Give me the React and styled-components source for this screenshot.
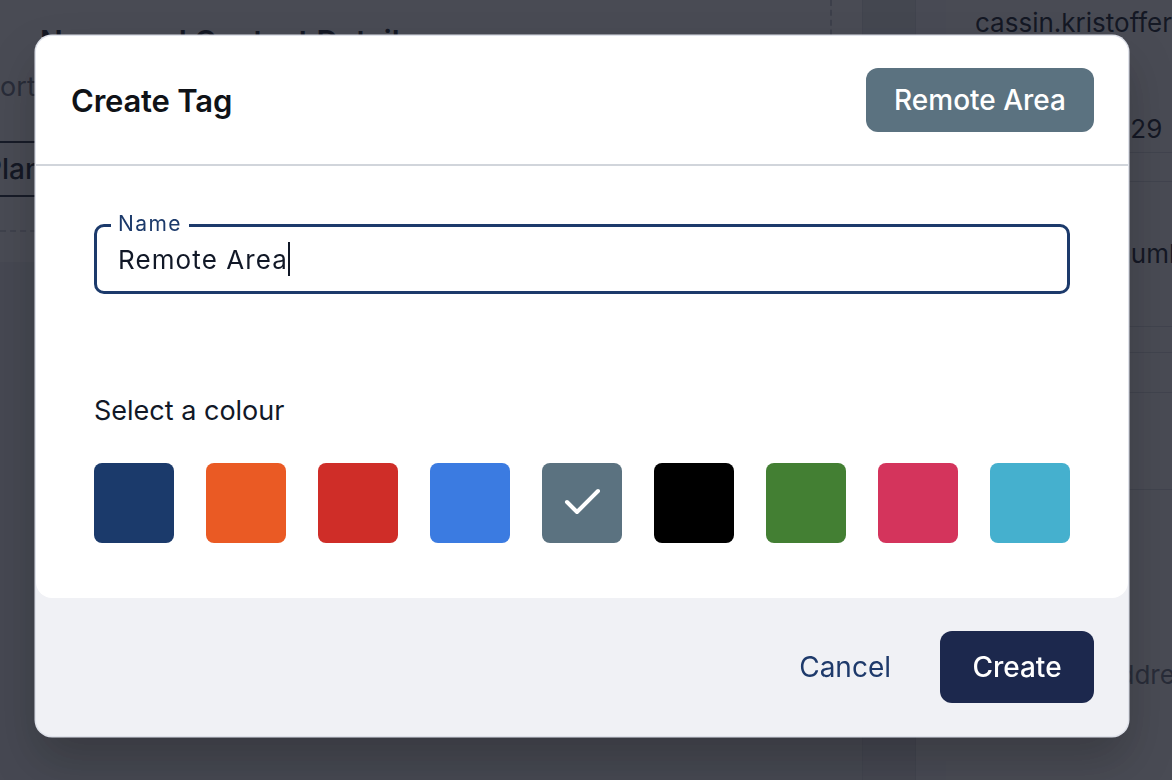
import React, { useState } from "react";
import styled, { createGlobalStyle } from "styled-components";

const GlobalStyle = createGlobalStyle`
  * { box-sizing: border-box; }
  html, body { margin: 0; padding: 0; }
  body {
    font-family: Inter, "Noto Sans", sans-serif;
    overflow: hidden;
  }
`;

const COLOURS = [
  "#1b3a6b",
  "#ea5a24",
  "#cf2d28",
  "#3b7be1",
  "#5b7280",
  "#000000",
  "#437f33",
  "#d4345c",
  "#45b0ce",
];

export default function App() {
  const [name] = useState("Remote Area");
  const [selected, setSelected] = useState(4);

  return (
    <>
      <GlobalStyle />

      {/* page behind the modal */}
      <Page>
        <Main>
          <MainCard>
            <Heading>Name and Contact Details</Heading>
            <SubLine>Portal access</SubLine>
            <TabRow>
              <Tab>Plan</Tab>
            </TabRow>
            <DashedRule />
          </MainCard>
        </Main>
        <Gutter>
          <GutterShade />
          <GutterShade $light />
        </Gutter>
        <Sidebar>
          <Email>cassin.kristoffer@example.com</Email>
          <SideRow $h={113} $align="flex-end" $pad="0 0 8px">
            <SideValue $shift={69}>555-0129</SideValue>
          </SideRow>
          <SideRow $h={29} />
          <SideRow $h={145}>
            <SideValue>Phone number</SideValue>
          </SideRow>
          <SideRow $h={26} />
          <SideRow $h={40} />
          <SideRow $h={97} />
          <SideRow $h={300} $align="flex-start" $pad="170px 0 0">
            <SideValue $muted $shift={56}>Email address</SideValue>
          </SideRow>
        </Sidebar>
      </Page>

      <Overlay>
        <Dialog>
          <Panel>
            <Header>
              <Title>Create Tag</Title>
              <Chip $colour={COLOURS[selected]}>{name}</Chip>
            </Header>

            <Body>
              <FieldBox>
                <FieldLabel>Name</FieldLabel>
                <FieldValue>
                  {name}
                  <Caret />
                </FieldValue>
              </FieldBox>

              <SectionLabel>Select a colour</SectionLabel>

              <Swatches>
                {COLOURS.map((c, i) => (
                  <Swatch
                    key={c}
                    $colour={c}
                    onClick={() => setSelected(i)}
                    aria-label={c}
                  >
                    {i === selected && (
                      <svg width="80" height="80" viewBox="0 0 80 80">
                        <polyline
                          points="25,39 35,49 56,28"
                          fill="none"
                          stroke="#fff"
                          strokeWidth="4"
                          strokeLinecap="round"
                          strokeLinejoin="round"
                        />
                      </svg>
                    )}
                  </Swatch>
                ))}
              </Swatches>
            </Body>
          </Panel>

          <Footer>
            <CancelButton>Cancel</CancelButton>
            <CreateButton>Create</CreateButton>
          </Footer>
        </Dialog>
      </Overlay>
    </>
  );
}

// =========================== BACKGROUND PAGE ============================= //

const Page = styled.div`
  display: flex;
  width: 1172px;
  height: 780px;
  overflow: hidden;
  background: #f1f2f5;
`;

const Main = styled.div`
  width: 862px;
  flex-shrink: 0;
  padding-right: 30px;
  background: #fff;
  height: 262px;
`;

const MainCard = styled.div`
  height: 262px;
  border-right: 2px dashed #c4c8d0;
  overflow: hidden;
`;

const Heading = styled.div`
  padding: 23px 40px 0;
  font-size: 30px;
  line-height: 36px;
  font-weight: 600;
  color: #111827;
`;

const SubLine = styled.div`
  margin: 12px 0 0 -17px;
  font-size: 27px;
  line-height: 32px;
  color: #6b7280;
`;

const TabRow = styled.div`
  margin-top: 38px;
  height: 56px;
  display: flex;
  align-items: center;
  border-top: 2px solid #1f2937;
  border-bottom: 2px solid #1f2937;
`;

const Tab = styled.span`
  margin-left: -16px;
  font-size: 28px;
  font-weight: 500;
  color: #111827;
`;

const DashedRule = styled.div`
  margin-top: 33px;
  border-bottom: 2px dashed #d1d5db;
`;

const Gutter = styled.div`
  width: 84px;
  flex-shrink: 0;
  display: flex;
`;

const GutterShade = styled.div`
  flex: ${(p) => (p.$light ? "0 0 31px" : "1")};
  background: ${(p) => (p.$light ? "#fbfbfc" : "#e9eaee")};
  border-left: 1px solid #dcdfe5;
`;

const Sidebar = styled.div`
  flex: 1;
  background: #fff;
  padding-left: 29px;
  display: flex;
  flex-direction: column;
  overflow: hidden;
`;

const Email = styled.div`
  padding-top: 6px;
  font-size: 26px;
  line-height: 34px;
  color: #111827;
  white-space: nowrap;
`;

const SideRow = styled.div`
  flex-shrink: 0;
  height: ${(p) => p.$h}px;
  border-bottom: 1px solid #d9dce2;
  display: flex;
  align-items: ${(p) => p.$align || "center"};
  padding: ${(p) => p.$pad || "0"};
  margin-left: -29px;
  padding-left: 29px;
`;

const SideValue = styled.span`
  font-size: 26px;
  line-height: 30px;
  color: ${(p) => (p.$muted ? "#6b7280" : "#111827")};
  white-space: nowrap;
  margin-left: ${(p) => p.$shift || 55}px;
`;

// =========================== MODAL ============================= //

const Overlay = styled.div`
  position: fixed;
  inset: 0;
  background: rgba(22, 24, 36, 0.78);
  display: flex;
  align-items: flex-start;
  padding: 36px 44px 44px 36px;
`;

const Dialog = styled.div`
  width: 1092px;
  height: 700px;
  border-radius: 16px;
  background: #f0f1f5;
  box-shadow: 0 0 0 1.5px #dfe2ea, 0 24px 48px rgba(0, 0, 0, 0.22);
  display: flex;
  flex-direction: column;
  overflow: hidden;
`;

const Panel = styled.div`
  background: #fff;
  border-radius: 0 0 16px 16px;
  display: flex;
  flex-direction: column;
`;

const Header = styled.div`
  height: 130px;
  display: flex;
  align-items: center;
  justify-content: space-between;
  padding: 0 34px 0 35px;
  border-bottom: 2px solid #d1d5db;
`;

const Title = styled.h2`
  margin: 0;
  font-size: 31px;
  font-weight: 600;
  color: #0f1217;
  letter-spacing: -0.2px;
`;

const Chip = styled.div`
  height: 64px;
  padding: 0 28px;
  display: flex;
  align-items: center;
  border-radius: 12px;
  background: ${(p) => p.$colour};
  color: #fff;
  font-size: 28px;
  font-weight: 500;
`;

const Body = styled.div`
  padding: 58px 58px 55px;
  display: flex;
  flex-direction: column;
`;

const FieldBox = styled.div`
  position: relative;
  height: 70px;
  border: 3px solid #1c3a6b;
  border-radius: 10px;
  display: flex;
  align-items: center;
  padding: 0 21px;
`;

const FieldLabel = styled.span`
  position: absolute;
  top: -15px;
  left: 14px;
  padding: 0 7px;
  background: #fff;
  font-size: 21px;
  line-height: 24px;
  letter-spacing: 1.4px;
  color: #1c3a6b;
`;

const FieldValue = styled.div`
  display: flex;
  align-items: center;
  font-size: 26px;
  letter-spacing: 1.1px;
  color: #111827;
`;

const Caret = styled.span`
  display: inline-block;
  width: 2px;
  height: 34px;
  margin-left: 0;
  background: #111827;
`;

const SectionLabel = styled.div`
  margin-top: 102px;
  font-size: 27px;
  line-height: 30px;
  color: #111827;
`;

const Swatches = styled.div`
  margin-top: 37px;
  display: flex;
  justify-content: space-between;
`;

const Swatch = styled.button`
  width: 80px;
  height: 80px;
  padding: 0;
  border: none;
  border-radius: 8px;
  background: ${(p) => p.$colour};
  display: grid;
  place-items: center;
  cursor: pointer;
`;

const Footer = styled.div`
  flex: 1;
  display: flex;
  align-items: center;
  justify-content: flex-end;
  gap: 49px;
  padding-right: 34px;
`;

const CancelButton = styled.button`
  border: none;
  background: none;
  padding: 0;
  font-family: inherit;
  font-size: 28px;
  color: #1e3a6b;
  cursor: pointer;
`;

const CreateButton = styled.button`
  width: 154px;
  height: 72px;
  border: none;
  border-radius: 12px;
  background: #1c284d;
  color: #fff;
  font-family: inherit;
  font-size: 28px;
  font-weight: 500;
  cursor: pointer;
`;
